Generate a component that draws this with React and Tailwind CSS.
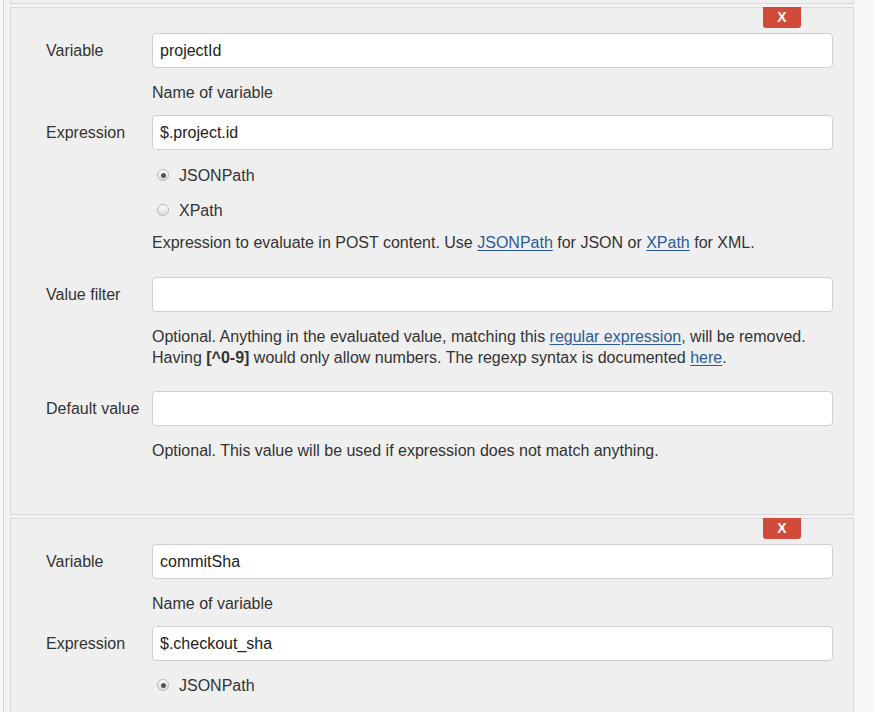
import React from 'react'

const font = { fontFamily: '"Liberation Sans", Arial, sans-serif' }

function Radio({ checked, label }) {
  return (
    <div className="flex items-center h-5">
      <span className="ml-[5px] w-[12px] h-[12px] rounded-full border border-[#b8b8b8] bg-gradient-to-b from-[#fbfbfb] to-[#dcdcdc] flex items-center justify-center">
        {checked && <span className="w-[5px] h-[5px] rounded-full bg-[#555]" />}
      </span>
      <span className="ml-[10px] text-[#333]">{label}</span>
    </div>
  )
}

function Link({ children }) {
  return <a className="text-[#2b5a9b] underline underline-offset-2">{children}</a>
}

function Field({ label, value }) {
  return (
    <div className="grid grid-cols-[141px_681px] items-center">
      <div className="pl-[35px] text-[#333]">{label}</div>
      <div className="h-[35px] bg-white border border-[#cfcfcf] rounded-[4px] flex items-center pl-[7px] text-[#222]">{value}</div>
    </div>
  )
}

function Help({ children, className = '' }) {
  return <div className={`ml-[141px] text-[#333] leading-[21px] ${className}`}>{children}</div>
}

function Panel({ children, className = '' }) {
  return (
    <div className={`relative bg-[#efefef] border border-[#d9d9d9] w-[844px] pt-[25px] ${className}`}>
      <button className="absolute top-[-1px] right-[52px] w-[38px] h-[21px] bg-[#d24a3a] rounded-b-[3px] text-white font-bold text-[14px] flex items-center justify-center">X</button>
      {children}
    </div>
  )
}

export default function App() {
  return (
    <div className="w-[874px] h-[712px] overflow-hidden bg-[#f7f7f7] text-[16px]" style={font}>
      <div className="ml-[3px] border-l border-[#d4d4d4] pl-[6px] h-full flex flex-col gap-[3px] bg-[#f2f2f2] w-[852px]">
        <div className="h-[4px] bg-[#efefef] border border-t-0 border-[#d9d9d9] w-[844px] shrink-0" />
        <Panel className="h-[508px] shrink-0">
          <Field label="Variable" value="projectId" />
          <Help className="mt-[14px]">Name of variable</Help>
          <div className="mt-[12px]">
            <Field label="Expression" value="$.project.id" />
          </div>
          <Help className="mt-[15px]">
            <Radio checked label="JSONPath" />
            <div className="mt-[15px]"><Radio label="XPath" /></div>
          </Help>
          <Help className="mt-[12px]">
            Expression to evaluate in POST content. Use <Link>JSONPath</Link> for JSON or <Link>XPath</Link> for XML.
          </Help>
          <div className="mt-[24px]">
            <Field label="Value filter" value="" />
          </div>
          <Help className="mt-[14px]">
            Optional. Anything in the evaluated value, matching this <Link>regular expression</Link>, will be removed.
            <br />
            Having <b>[^0-9]</b> would only allow numbers. The regexp syntax is documented <Link>here</Link>.
          </Help>
          <div className="mt-[23px]">
            <Field label="Default value" value="" />
          </div>
          <Help className="mt-[14px]">Optional. This value will be used if expression does not match anything.</Help>
        </Panel>
        <Panel className="shrink-0 h-[300px]">
          <Field label="Variable" value="commitSha" />
          <Help className="mt-[14px]">Name of variable</Help>
          <div className="mt-[12px]">
            <Field label="Expression" value="$.checkout_sha" />
          </div>
          <Help className="mt-[14px]">
            <Radio checked label="JSONPath" />
          </Help>
        </Panel>
      </div>
    </div>
  )
}
